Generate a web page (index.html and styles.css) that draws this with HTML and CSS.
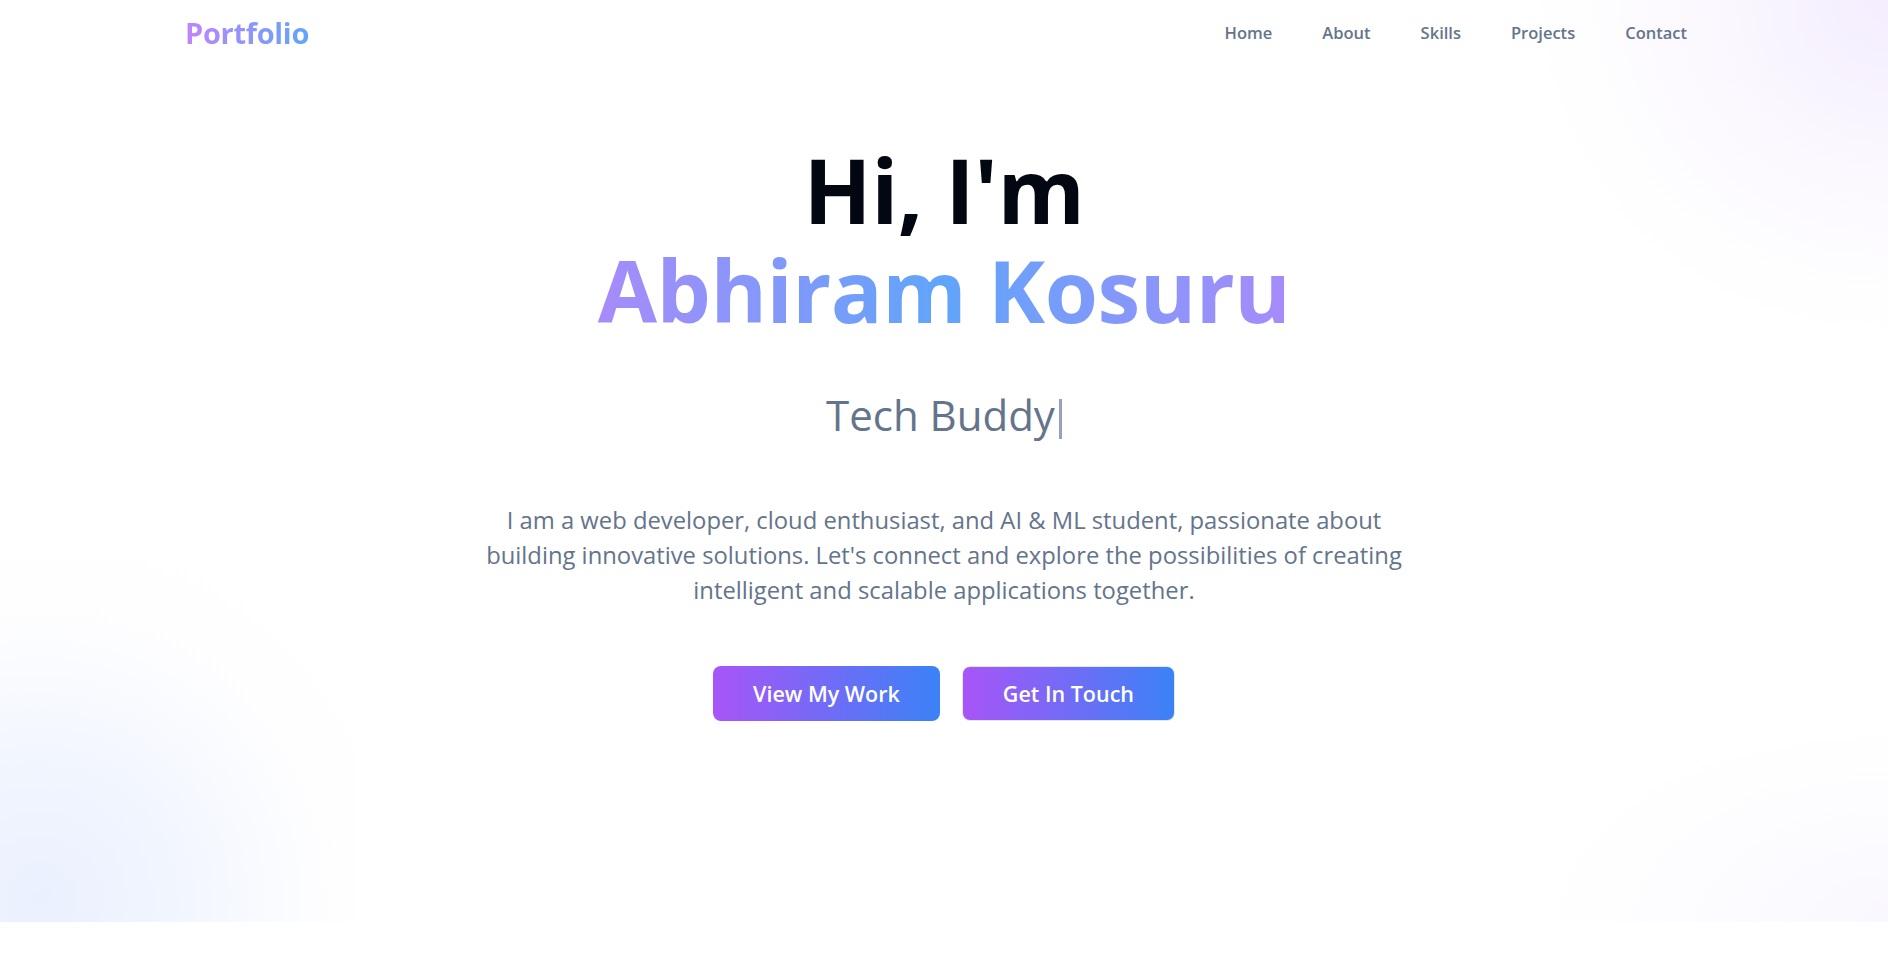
FILE: index.html
```html
<!DOCTYPE html>
<html lang="en">
<head>
<meta charset="utf-8">
<title>Portfolio</title>
<link rel="stylesheet" href="styles.css">
</head>
<body>
<section class="hero">
  <div class="blob blob-tr"></div>
  <div class="blob blob-br"></div>
  <div class="blob blob-bl"></div>
  <header class="nav">
    <a class="logo" href="#">Portfolio</a>
    <ul class="links">
      <li><a href="#">Home</a></li>
      <li><a href="#">About</a></li>
      <li><a href="#">Skills</a></li>
      <li><a href="#">Projects</a></li>
      <li><a href="#">Contact</a></li>
    </ul>
  </header>
  <div class="hero-content">
    <h1 class="title">
      <span class="hi">Hi, I'm</span>
      <span class="name">Abhiram Kosuru</span>
    </h1>
    <p class="role">Tech Buddy<span class="cursor"></span></p>
    <p class="intro">I am a web developer, cloud enthusiast, and AI &amp; ML student, passionate about building innovative solutions. Let's connect and explore the possibilities of creating intelligent and scalable applications together.</p>
    <div class="actions">
      <a class="btn" href="#">View My Work</a>
      <a class="btn btn-outline" href="#">Get In Touch</a>
    </div>
  </div>
</section>
</body>
</html>
```

FILE: styles.css
```css
* { box-sizing: border-box; }

html, body {
  margin: 0;
  padding: 0;
  background: #ffffff;
  font-family: "Open Sans", "Noto Sans", "Liberation Sans", sans-serif;
}

a { text-decoration: none; }

.hero {
  position: relative;
  height: 922px;
  overflow: hidden;
  background: #ffffff;
}

.blob {
  position: absolute;
  pointer-events: none;
}

.blob-tr {
  top: 0;
  right: 0;
  width: 440px;
  height: 440px;
  background: radial-gradient(ellipse 360px 340px at 100% 0%, rgba(243, 236, 254, 0.95) 0%, rgba(247, 242, 254, 0.6) 45%, rgba(255, 255, 255, 0) 100%);
}

.blob-br {
  bottom: 0;
  right: 0;
  width: 360px;
  height: 260px;
  background: radial-gradient(ellipse 360px 200px at 100% 100%, rgba(248, 246, 254, 0.8) 0%, rgba(255, 255, 255, 0) 100%);
}

.blob-bl {
  left: 0;
  bottom: 0;
  width: 356px;
  height: 362px;
  background: radial-gradient(circle 390px at 40px 340px, #eaf0fe 0%, rgba(238, 243, 254, 0.8) 35%, rgba(250, 251, 255, 0.45) 70%, rgba(255, 255, 255, 0) 100%);
}

.nav {
  position: relative;
  z-index: 1;
  width: 1518px;
  height: 65px;
  margin: 0 auto;
  display: flex;
  align-items: center;
  justify-content: space-between;
}

.logo {
  font-size: 29px;
  font-weight: 700;
  letter-spacing: -0.3px;
  background: linear-gradient(90deg, #c084fc 0%, #60a5fa 100%);
  -webkit-background-clip: text;
  background-clip: text;
  color: transparent;
}

.links {
  list-style: none;
  margin: 0;
  padding: 0 16px 0 0;
  display: flex;
  gap: 50px;
}

.links a {
  font-size: 16.5px;
  font-weight: 600;
  color: #64748b;
}

.hero-content {
  position: relative;
  z-index: 1;
  display: flex;
  flex-direction: column;
  align-items: center;
  text-align: center;
}

.title {
  margin: 75px 0 0;
  font-size: 86px;
  line-height: 100px;
  font-weight: 700;
  letter-spacing: -0.5px;
}

.hi {
  display: block;
  font-size: 89px;
  color: #030712;
}

.name {
  display: block;
  background: linear-gradient(90deg, #a78bfa 0%, #60a5fa 50%, #a78bfa 100%);
  -webkit-background-clip: text;
  background-clip: text;
  color: transparent;
}

.role {
  margin: 43px 0 0;
  font-size: 42px;
  line-height: 63px;
  font-weight: 400;
  color: #64748b;
}

.cursor {
  display: inline-block;
  width: 3px;
  height: 40px;
  margin-left: 4px;
  vertical-align: -8px;
  background: #94a3b8;
}

.intro {
  margin: 57px 0 0;
  max-width: 930px;
  font-size: 23.8px;
  line-height: 35px;
  color: #64748b;
}

.actions {
  margin-top: 58px;
  display: flex;
  gap: 22px;
}

.btn {
  display: inline-flex;
  align-items: center;
  justify-content: center;
  height: 55px;
  padding: 0 40px;
  border-radius: 8px;
  font-size: 21.5px;
  font-weight: 600;
  color: #ffffff;
  background: linear-gradient(90deg, #a855f7 0%, #3b82f6 100%);
}

.btn-outline {
  border: 1px solid #e2e8f0;
}
```
